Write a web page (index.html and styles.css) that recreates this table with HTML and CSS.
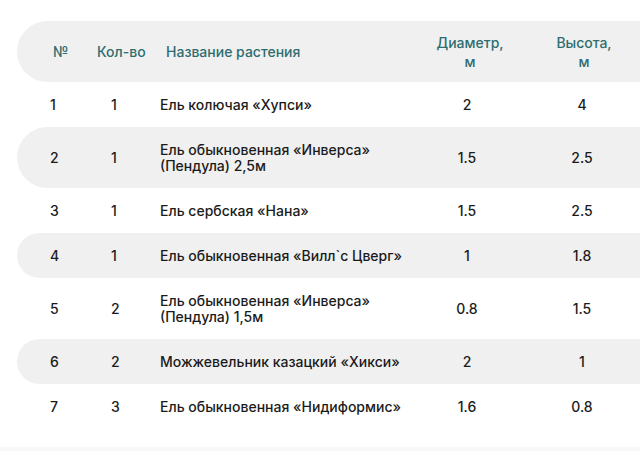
FILE: index.html
```html
<!DOCTYPE html>
<html lang="ru">
<head>
<meta charset="utf-8">
<title>Растения</title>
<link rel="stylesheet" href="styles.css">
</head>
<body>
<div class="page">
  <div class="table">
    <div class="head">
      <div class="h h-num">№</div>
      <div class="h h-qty">Кол-во</div>
      <div class="h h-name">Название растения</div>
      <div class="h h-dia">Диаметр,<br>м</div>
      <div class="h h-hei">Высота,<br>м</div>
    </div>
    <div class="row">
      <div class="c c-num">1</div><div class="c c-qty">1</div><div class="c c-name">Ель колючая «Хупси»</div><div class="c c-dia">2</div><div class="c c-hei">4</div>
    </div>
    <div class="row alt">
      <div class="c c-num">2</div><div class="c c-qty">1</div><div class="c c-name">Ель обыкновенная «Инверса» (Пендула) 2,5м</div><div class="c c-dia">1.5</div><div class="c c-hei">2.5</div>
    </div>
    <div class="row">
      <div class="c c-num">3</div><div class="c c-qty">1</div><div class="c c-name">Ель сербская «Нана»</div><div class="c c-dia">1.5</div><div class="c c-hei">2.5</div>
    </div>
    <div class="row alt">
      <div class="c c-num">4</div><div class="c c-qty">1</div><div class="c c-name">Ель обыкновенная «Вилл`с Цверг»</div><div class="c c-dia">1</div><div class="c c-hei">1.8</div>
    </div>
    <div class="row">
      <div class="c c-num">5</div><div class="c c-qty">2</div><div class="c c-name">Ель обыкновенная «Инверса» (Пендула) 1,5м</div><div class="c c-dia">0.8</div><div class="c c-hei">1.5</div>
    </div>
    <div class="row alt">
      <div class="c c-num">6</div><div class="c c-qty">2</div><div class="c c-name">Можжевельник казацкий «Хикси»</div><div class="c c-dia">2</div><div class="c c-hei">1</div>
    </div>
    <div class="row">
      <div class="c c-num">7</div><div class="c c-qty">3</div><div class="c c-name">Ель обыкновенная «Нидиформис»</div><div class="c c-dia">1.6</div><div class="c c-hei">0.8</div>
    </div>
  </div>
  <div class="foot"></div>
</div>
</body>
</html>
```
FILE: styles.css
```css
html, body {
  margin: 0;
  padding: 0;
  background: #ffffff;
  overflow: hidden;
}
body {
  font-family: Inter, "Noto Sans", "Liberation Sans", sans-serif;
  font-weight: 500;
  font-size: 14px;
  color: #1b1b1b;
}
.page {
  width: 640px;
  height: 451px;
  padding-top: 21px;
  box-sizing: border-box;
  display: flex;
  flex-direction: column;
}
.table {
  margin-left: 17px;
  width: 623px;
  display: flex;
  flex-direction: column;
}
.head {
  display: grid;
  grid-template-columns: 80px 69px 254px 100px 120px;
  align-items: center;
  background: #f0f0f0;
  border-radius: 31px 0 0 31px;
  height: 61px;
  color: #2e6d6f;
  line-height: 19px;
}
.h-num { padding-left: 36px; }
.h-dia { text-align: center; }
.h-hei { text-align: center; padding-left: 8px; }
.row {
  display: grid;
  grid-template-columns: 86px 57px 260px 94px 126px;
  align-items: center;
  padding: 14.5px 0;
  line-height: 16px;
}
.row.alt {
  background: #f0f0f0;
  border-radius: 31px 0 0 31px;
}
.c-num { padding-left: 33px; }
.c-qty { padding-left: 8px; }
.c-dia { text-align: center; }
.c-hei { text-align: center; padding-left: 10px; }
.foot {
  margin-top: auto;
  height: 4px;
  background: #f8f8f8;
}
```
